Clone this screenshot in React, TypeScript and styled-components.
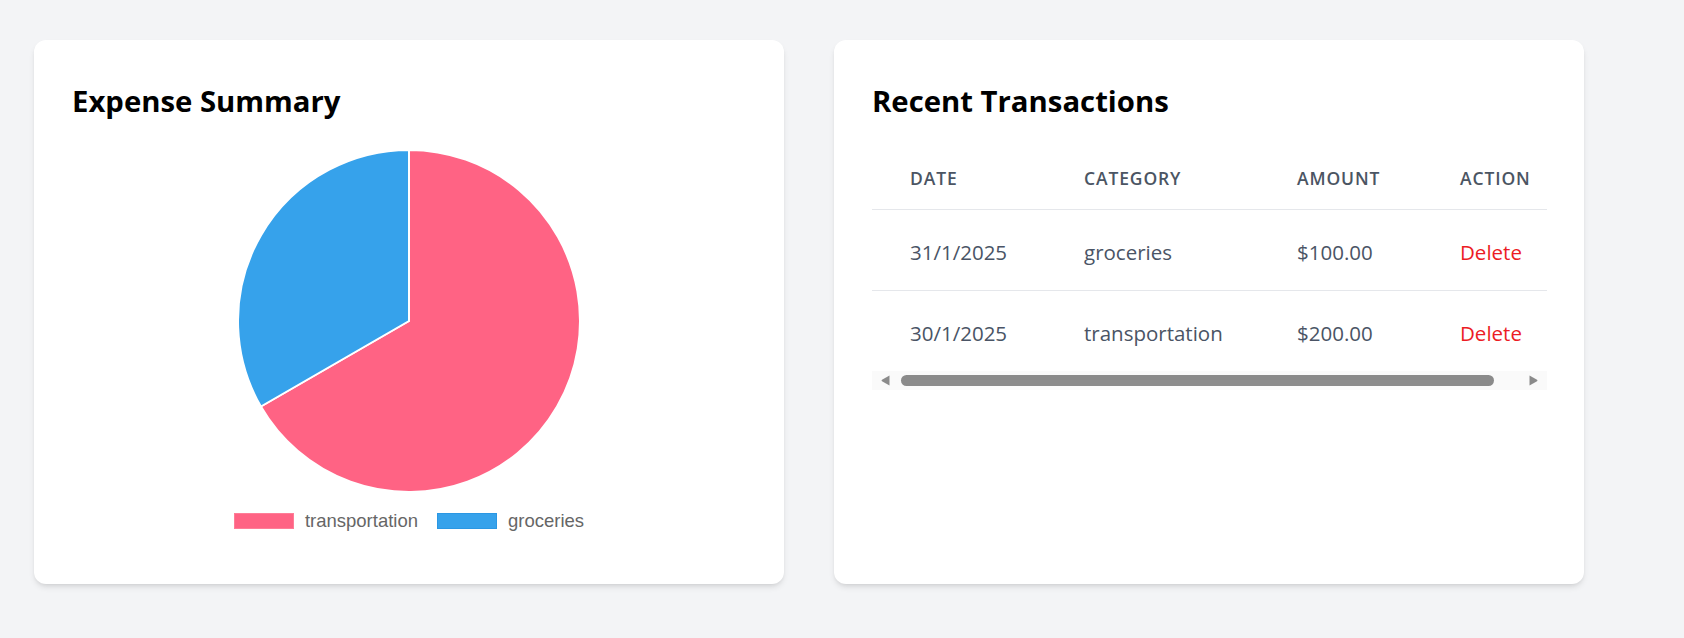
import React from "react";
import styled, { createGlobalStyle } from "styled-components";

const GlobalStyle = createGlobalStyle`
  html, body {
    margin: 0;
    padding: 0;
    background: #f3f4f6;
    font-family: "Open Sans", "Noto Sans", Arial, sans-serif;
  }
  * { box-sizing: border-box; }
`;

const Page = styled.div`
  min-height: 638px;
  padding: 40px 34px;
  display: grid;
  grid-template-columns: repeat(2, 750px);
  gap: 50px;
  align-items: stretch;
  justify-content: start;
`;

const Card = styled.section`
  background: #ffffff;
  border-radius: 12px;
  box-shadow: 0 4px 6px -1px rgba(0, 0, 0, 0.1), 0 2px 4px -2px rgba(0, 0, 0, 0.1);
  padding: 42px 38px 38px;
  height: 544px;
  display: flex;
  flex-direction: column;
`;

const Title = styled.h2`
  margin: 0 0 27px;
  font-size: 29.3px;
  line-height: 38px;
  font-weight: 700;
  color: #000;
`;

const ChartArea = styled.div`
  display: flex;
  flex-direction: column;
  align-items: center;
  padding-top: 2px;
`;

const PieSvg = styled.svg`
  display: block;
  width: 344px;
  height: 344px;
`;

const Legend = styled.div`
  display: flex;
  align-items: center;
  gap: 19px;
  height: 20px;
  margin-top: 18px;
  font-family: "Liberation Sans", Arial, sans-serif;
  font-size: 18.5px;
  color: #666666;
`;

const LegendItem = styled.div`
  display: flex;
  align-items: center;
  gap: 11px;
`;

const Swatch = styled.span<{ $fill: string; $stroke: string }>`
  display: block;
  width: 60px;
  height: 16px;
  background: ${(p) => p.$fill};
  border: 1px solid ${(p) => p.$stroke};
`;

const TableWrap = styled.div`
  width: 675px;
  display: flex;
  flex-direction: column;
`;

const TableViewport = styled.div`
  width: 675px;
  overflow: hidden;
`;

const Table = styled.table`
  width: 700px;
  table-layout: fixed;
  border-collapse: collapse;
`;

const HeadCell = styled.th`
  text-align: left;
  padding: 18px 0 17px 38px;
  font-size: 17.5px;
  line-height: 27px;
  font-weight: 600;
  letter-spacing: 0.05em;
  text-transform: uppercase;
  color: #4b5563;
  border-bottom: 1px solid #e5e7eb;
`;

const Row = styled.tr`
  & + & {
    border-top: 1px solid #e5e7eb;
  }
`;

const Cell = styled.td<{ $danger?: boolean }>`
  padding: 27px 0 22px 38px;
  font-size: 20.5px;
  line-height: 31px;
  color: ${(p) => (p.$danger ? "#ec1c24" : "#4a5465")};
  white-space: nowrap;
`;

const DeleteButton = styled.button`
  background: none;
  border: none;
  padding: 0;
  font: inherit;
  color: inherit;
  cursor: pointer;
`;

const ScrollBar = styled.div`
  display: flex;
  align-items: stretch;
  height: 19px;
  background: #fafafa;
`;

const ScrollArrow = styled.div`
  width: 27px;
  flex: none;
  display: flex;
  align-items: center;
  justify-content: center;
`;

const ScrollTrack = styled.div`
  flex: 1;
  display: flex;
  align-items: center;
  padding: 0 2px;
`;

const ScrollThumb = styled.div`
  height: 11px;
  border-radius: 6px;
  background: #8b8b8b;
`;

const R = 172;
const slices = [
  { label: "transportation", value: 200, fill: "#ff6384", stroke: "#ff7d97" },
  { label: "groceries", value: 100, fill: "#36a2eb", stroke: "#2b97e3" },
];

function arcPath(start: number, end: number) {
  const r = R - 1;
  const p = (a: number) => [r * Math.sin(a), -r * Math.cos(a)];
  const [x1, y1] = p(start);
  const [x2, y2] = p(end);
  const large = end - start > Math.PI ? 1 : 0;
  return `M0 0 L${x1.toFixed(3)} ${y1.toFixed(3)} A${r} ${r} 0 ${large} 1 ${x2.toFixed(3)} ${y2.toFixed(3)} Z`;
}

function Pie() {
  const total = slices.reduce((s, x) => s + x.value, 0);
  let acc = 0;
  return (
    <PieSvg viewBox={`${-R} ${-R} ${2 * R} ${2 * R}`}>
      {slices.map((s) => {
        const start = (acc / total) * Math.PI * 2;
        acc += s.value;
        const end = (acc / total) * Math.PI * 2;
        return (
          <path
            key={s.label}
            d={arcPath(start, end)}
            fill={s.fill}
            stroke="#ffffff"
            strokeWidth={2}
            strokeLinejoin="round"
          />
        );
      })}
    </PieSvg>
  );
}

function Arrow({ dir }: { dir: "left" | "right" }) {
  return (
    <ScrollArrow>
      <svg width="9" height="11" viewBox="0 0 9 11">
        {dir === "left" ? (
          <path d="M8.5 0.5 L8.5 10.5 L1 6.2 Q0 5.5 1 4.8 Z" fill="#8b8b8b" />
        ) : (
          <path d="M0.5 0.5 L0.5 10.5 L8 6.2 Q9 5.5 8 4.8 Z" fill="#8b8b8b" />
        )}
      </svg>
    </ScrollArrow>
  );
}

const transactions = [
  { date: "31/1/2025", category: "groceries", amount: "$100.00" },
  { date: "30/1/2025", category: "transportation", amount: "$200.00" },
];

const VIEW_W = 675;
const TABLE_W = 700;
const TRACK_W = VIEW_W - 54 - 4;

export default function App() {
  return (
    <>
      <GlobalStyle />
      <Page>
        <Card>
          <Title>Expense Summary</Title>
          <ChartArea>
            <Pie />
            <Legend>
              {slices.map((s) => (
                <LegendItem key={s.label}>
                  <Swatch $fill={s.fill} $stroke={s.stroke} />
                  <span>{s.label}</span>
                </LegendItem>
              ))}
            </Legend>
          </ChartArea>
        </Card>
        <Card>
          <Title>Recent Transactions</Title>
          <TableWrap>
            <TableViewport>
              <Table>
                <colgroup>
                  <col style={{ width: 174 }} />
                  <col style={{ width: 213 }} />
                  <col style={{ width: 163 }} />
                  <col style={{ width: 150 }} />
                </colgroup>
                <thead>
                  <tr>
                    <HeadCell>Date</HeadCell>
                    <HeadCell>Category</HeadCell>
                    <HeadCell>Amount</HeadCell>
                    <HeadCell>Action</HeadCell>
                  </tr>
                </thead>
                <tbody>
                  {transactions.map((t) => (
                    <Row key={t.date}>
                      <Cell>{t.date}</Cell>
                      <Cell>{t.category}</Cell>
                      <Cell>{t.amount}</Cell>
                      <Cell $danger>
                        <DeleteButton>Delete</DeleteButton>
                      </Cell>
                    </Row>
                  ))}
                </tbody>
              </Table>
            </TableViewport>
            <ScrollBar>
              <Arrow dir="left" />
              <ScrollTrack>
                <ScrollThumb style={{ width: Math.round(TRACK_W * (VIEW_W / TABLE_W) - 2) }} />
              </ScrollTrack>
              <Arrow dir="right" />
            </ScrollBar>
          </TableWrap>
        </Card>
      </Page>
    </>
  );
}
